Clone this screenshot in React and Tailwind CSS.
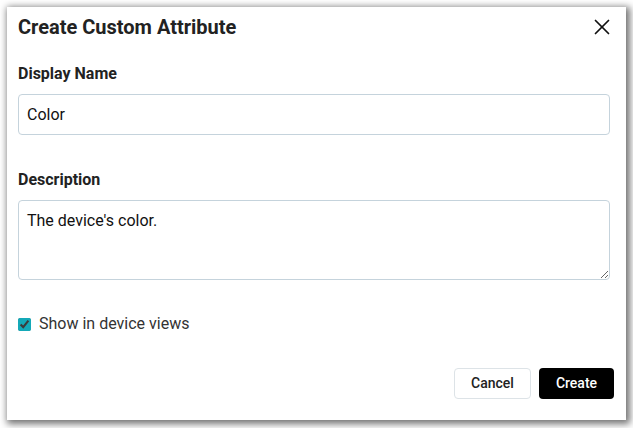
import { X } from 'lucide-react';

const App = () => {
    return (
        <div className="w-[633px] h-[428px] bg-white p-[7px]" style={{ fontFamily: 'Roboto, "Liberation Sans", sans-serif' }}>
            <div className="w-[619px] h-[413px] bg-white shadow-[2px_2px_7px_2px_rgba(0,0,0,0.55)] flex flex-col pl-[11px] pr-[12px]">
                <div className="flex items-center justify-between h-[38px] pt-[2px]">
                    <h1 className="text-[20px] font-bold text-[#222]">Create Custom Attribute</h1>
                    <X className="w-[26px] h-[26px] text-[#111] -mr-[1px]" strokeWidth={1.6} />
                </div>

                <label className="mt-[19px] text-[16px] font-bold text-[#222] leading-[20px]">Display Name</label>
                <input
                    defaultValue="Color"
                    className="mt-[10px] w-[592px] h-[41px] border border-[#c5d3dc] rounded-[4px] px-[8px] text-[16px] text-[#111] outline-none"
                />

                <label className="mt-[35px] text-[16px] font-bold text-[#222] leading-[20px]">Description</label>
                <textarea
                    defaultValue="The device's color."
                    className="mt-[10px] w-[592px] h-[80px] border border-[#c5d3dc] rounded-[4px] px-[8px] pt-[8px] text-[16px] text-[#111] outline-none"
                />

                <label className="mt-[32px] flex items-center gap-[8px] text-[16px] text-[#333]">
                    <input type="checkbox" defaultChecked className="w-[13px] h-[13px] accent-[#14a9b8]" />
                    Show in device views
                </label>

                <div className="mt-[32px] flex justify-end gap-[8px]">
                    <button className="w-[77px] h-[31px] border border-[#dde3e7] rounded-[4px] bg-white text-[14px] font-medium text-[#222]">Cancel</button>
                    <button className="w-[75px] h-[31px] rounded-[4px] bg-black text-[14px] font-medium text-white">Create</button>
                </div>
            </div>
        </div>
    );
};

export default App;
